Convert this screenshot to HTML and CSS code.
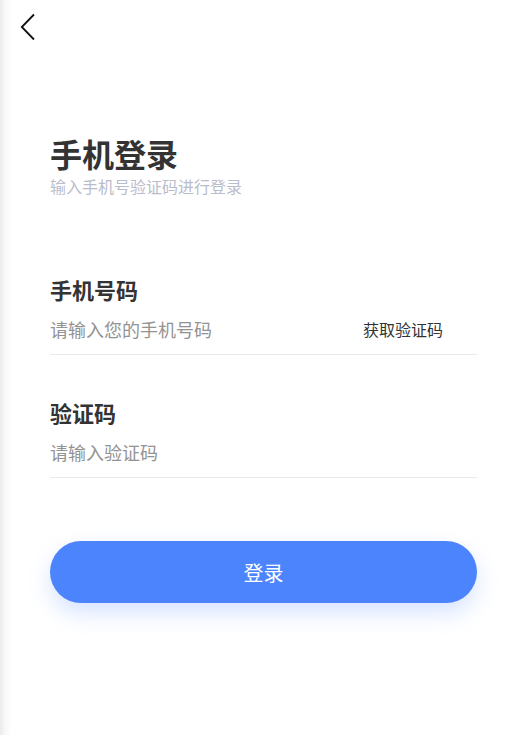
FILE: index.html
```html
<!DOCTYPE html>
<html lang="zh">
<head>
<meta charset="utf-8">
<title>手机登录</title>
<link rel="stylesheet" href="styles.css">
</head>
<body>
<div class="page">
  <header class="topbar">
    <button class="back" aria-label="返回">
      <svg width="16" height="28" viewBox="0 0 16 28"><path d="M14 1.5 L1.8 14 L14 26.5" fill="none" stroke="#111" stroke-width="1.8"/></svg>
    </button>
  </header>
  <main class="content">
    <h1 class="title">手机登录</h1>
    <p class="subtitle">输入手机号验证码进行登录</p>

    <div class="field first">
      <div class="label">手机号码</div>
      <div class="row">
        <input class="input" type="text" placeholder="请输入您的手机号码">
        <span class="getcode">获取验证码</span>
      </div>
    </div>

    <div class="field">
      <div class="label">验证码</div>
      <div class="row">
        <input class="input" type="text" placeholder="请输入验证码">
      </div>
    </div>

    <button class="submit">登录</button>
  </main>
</div>
</body>
</html>
```

FILE: styles.css
```css
html, body {
  margin: 0;
  padding: 0;
}
body {
  width: 528px;
  min-height: 735px;
  background: linear-gradient(to right, #ebebeb 0, #f7f7f7 5px, #ffffff 11px);
  font-family: "Noto Sans CJK SC", "Noto Sans", sans-serif;
  color: #333;
}
.page {
  min-height: 735px;
}
.topbar {
  height: 52px;
  display: flex;
  align-items: flex-start;
}
.back {
  margin: 12px 0 0 19px;
  padding: 0;
  border: 0;
  background: none;
  width: 18px;
  height: 30px;
  display: flex;
  align-items: center;
  justify-content: center;
}
.content {
  padding: 84px 51px 0 50px;
  display: flex;
  flex-direction: column;
}
.title {
  margin: 0;
  font-size: 32px;
  line-height: 34px;
  font-weight: 700;
  color: #333;
}
.subtitle {
  margin: 6px 0 0;
  font-size: 16px;
  line-height: 20px;
  color: #b9bdcb;
}
.field {
  margin-top: 45px;
}
.field.first {
  margin-top: 81px;
}
.label {
  font-size: 22px;
  line-height: 24px;
  font-weight: 700;
  color: #333;
}
.row {
  box-sizing: border-box;
  height: 54px;
  padding-top: 3px;
  display: flex;
  align-items: center;
  border-bottom: 1px solid #ebebeb;
}
.input {
  flex: 1;
  min-width: 0;
  border: 0;
  outline: none;
  padding: 0;
  background: transparent;
  font-family: inherit;
  font-size: 18px;
  color: #333;
}
.input::placeholder {
  color: #939393;
}
.getcode {
  font-size: 16px;
  color: #333;
  margin-right: 34px;
}
.submit {
  margin-top: 63px;
  height: 62px;
  border: 0;
  border-radius: 31px;
  background: #4b84fd;
  color: #fff;
  font-family: inherit;
  font-size: 20px;
  box-shadow: 0 10px 22px rgba(75, 132, 253, 0.22);
}
```
